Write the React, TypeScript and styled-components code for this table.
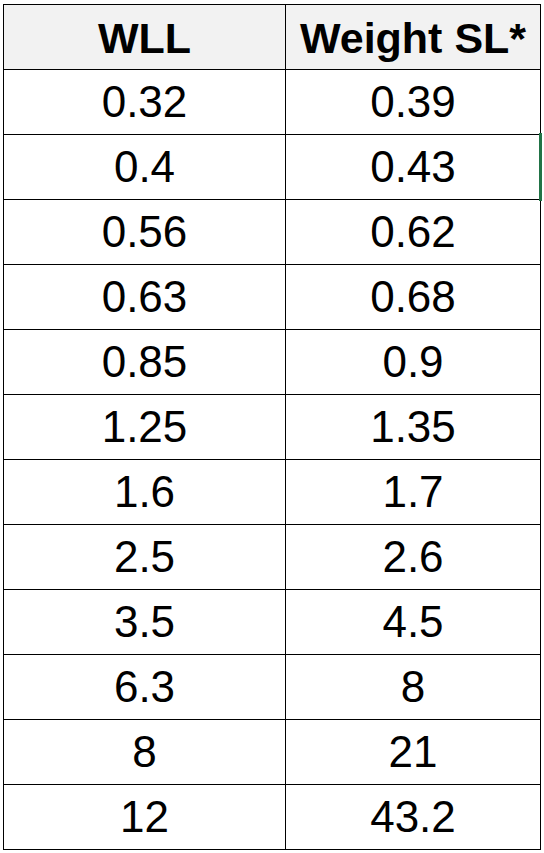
import React from "react";
import styled, { createGlobalStyle } from "styled-components";

const GlobalStyle = createGlobalStyle`
  html, body {
    margin: 0;
    padding: 0;
    background: #ffffff;
  }
  body {
    font-family: "Liberation Sans", Arial, sans-serif;
  }
`;

const Page = styled.div`
  position: relative;
  width: 544px;
  height: 853px;
  padding: 4px 0 0 3px;
  box-sizing: border-box;
`;

const Sheet = styled.div`
  display: grid;
  grid-template-columns: 281px 254px;
  grid-auto-rows: 64px;
  gap: 1px;
  padding: 1px;
  width: 538px;
  box-sizing: border-box;
  background: #000000;
`;

const Cell = styled.div<{ $header?: boolean }>`
  display: flex;
  align-items: center;
  justify-content: center;
  background: ${(p) => (p.$header ? "#f2f2f2" : "#ffffff")};
  color: #000000;
  font-family: "Liberation Sans", Arial, sans-serif;
  font-size: ${(p) => (p.$header ? "43px" : "44px")};
  font-weight: ${(p) => (p.$header ? 700 : 400)};
  line-height: 64px;
  white-space: nowrap;
  padding-top: ${(p) => (p.$header ? "2px" : "0")};
  box-sizing: border-box;
`;

const ActiveCellEdge = styled.div`
  position: absolute;
  left: 539px;
  top: 133px;
  width: 3px;
  height: 68px;
  background: #217346;
`;

const rows: [string, string][] = [
  ["0.32", "0.39"],
  ["0.4", "0.43"],
  ["0.56", "0.62"],
  ["0.63", "0.68"],
  ["0.85", "0.9"],
  ["1.25", "1.35"],
  ["1.6", "1.7"],
  ["2.5", "2.6"],
  ["3.5", "4.5"],
  ["6.3", "8"],
  ["8", "21"],
  ["12", "43.2"],
];

export default function App() {
  return (
    <>
      <GlobalStyle />
      <Page>
        <Sheet>
          <Cell $header>WLL</Cell>
          <Cell $header>Weight SL*</Cell>
          {rows.map(([a, b], i) => (
            <React.Fragment key={i}>
              <Cell>{a}</Cell>
              <Cell>{b}</Cell>
            </React.Fragment>
          ))}
        </Sheet>
        <ActiveCellEdge />
      </Page>
    </>
  );
}
